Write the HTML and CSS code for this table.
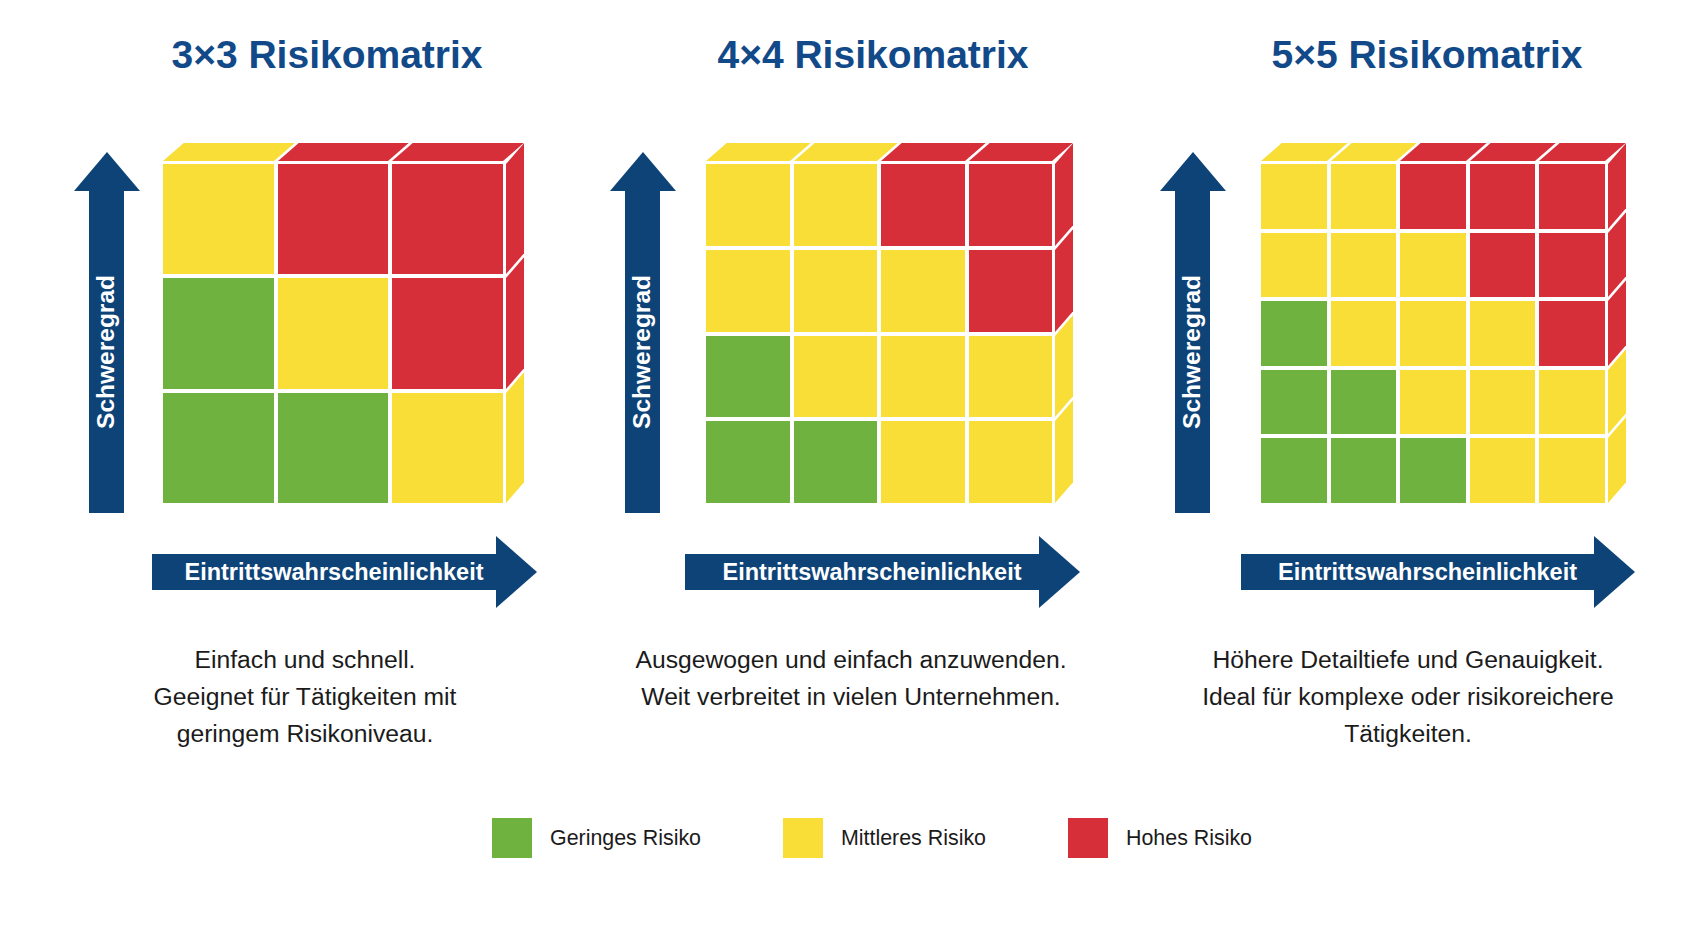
FILE: index.html
```html
<!DOCTYPE html>
<html lang="de">
<head>
<meta charset="utf-8">
<title>Risikomatrix Vergleich</title>
<link rel="stylesheet" href="styles.css">
</head>
<body>
<main class="page">
  <div class="columns">
    <section class="col col--a">
      <h2 class="title">3×3 Risikomatrix</h2>
      <div class="chart">
        <div class="v-arrow">
          <div class="v-head"></div>
          <div class="v-shaft"><span class="v-label">Schweregrad</span></div>
        </div>
        <div class="cube">
          <div class="face-top n3">
            <div class="y"></div><div class="r"></div><div class="r"></div>
          </div>
          <div class="face-front n3">
            <div class="y"></div><div class="r"></div><div class="r"></div>
            <div class="g"></div><div class="y"></div><div class="r"></div>
            <div class="g"></div><div class="g"></div><div class="y"></div>
          </div>
          <div class="face-side n3">
            <div class="r"></div><div class="r"></div><div class="y"></div>
          </div>
        </div>
      </div>
      <div class="h-arrow">
        <div class="h-body">Eintrittswahrscheinlichkeit</div>
        <div class="h-head"></div>
      </div>
      <p class="desc">Einfach und schnell.<br>Geeignet für Tätigkeiten mit<br>geringem Risikoniveau.</p>
    </section>

    <section class="col col--b">
      <h2 class="title">4×4 Risikomatrix</h2>
      <div class="chart">
        <div class="v-arrow">
          <div class="v-head"></div>
          <div class="v-shaft"><span class="v-label">Schweregrad</span></div>
        </div>
        <div class="cube">
          <div class="face-top n4">
            <div class="y"></div><div class="y"></div><div class="r"></div><div class="r"></div>
          </div>
          <div class="face-front n4">
            <div class="y"></div><div class="y"></div><div class="r"></div><div class="r"></div>
            <div class="y"></div><div class="y"></div><div class="y"></div><div class="r"></div>
            <div class="g"></div><div class="y"></div><div class="y"></div><div class="y"></div>
            <div class="g"></div><div class="g"></div><div class="y"></div><div class="y"></div>
          </div>
          <div class="face-side n4">
            <div class="r"></div><div class="r"></div><div class="y"></div><div class="y"></div>
          </div>
        </div>
      </div>
      <div class="h-arrow">
        <div class="h-body">Eintrittswahrscheinlichkeit</div>
        <div class="h-head"></div>
      </div>
      <p class="desc">Ausgewogen und einfach anzuwenden.<br>Weit verbreitet in vielen Unternehmen.</p>
    </section>

    <section class="col col--c">
      <h2 class="title">5×5 Risikomatrix</h2>
      <div class="chart">
        <div class="v-arrow">
          <div class="v-head"></div>
          <div class="v-shaft"><span class="v-label">Schweregrad</span></div>
        </div>
        <div class="cube">
          <div class="face-top n5">
            <div class="y"></div><div class="y"></div><div class="r"></div><div class="r"></div><div class="r"></div>
          </div>
          <div class="face-front n5">
            <div class="y"></div><div class="y"></div><div class="r"></div><div class="r"></div><div class="r"></div>
            <div class="y"></div><div class="y"></div><div class="y"></div><div class="r"></div><div class="r"></div>
            <div class="g"></div><div class="y"></div><div class="y"></div><div class="y"></div><div class="r"></div>
            <div class="g"></div><div class="g"></div><div class="y"></div><div class="y"></div><div class="y"></div>
            <div class="g"></div><div class="g"></div><div class="g"></div><div class="y"></div><div class="y"></div>
          </div>
          <div class="face-side n5">
            <div class="r"></div><div class="r"></div><div class="r"></div><div class="y"></div><div class="y"></div>
          </div>
        </div>
      </div>
      <div class="h-arrow">
        <div class="h-body">Eintrittswahrscheinlichkeit</div>
        <div class="h-head"></div>
      </div>
      <p class="desc">Höhere Detailtiefe und Genauigkeit.<br>Ideal für komplexe oder risikoreichere<br>Tätigkeiten.</p>
    </section>
  </div>

  <ul class="legend">
    <li class="legend-item"><span class="swatch g"></span>Geringes Risiko</li>
    <li class="legend-item"><span class="swatch y"></span>Mittleres Risiko</li>
    <li class="legend-item"><span class="swatch r"></span>Hohes Risiko</li>
  </ul>
</main>
</body>
</html>
```

FILE: styles.css
```css
* { box-sizing: border-box; }

html, body {
  margin: 0;
  padding: 0;
  background: #ffffff;
}

body {
  font-family: "Liberation Sans", Arial, Helvetica, sans-serif;
  color: #1b1b1b;
  width: 1701px;
  height: 925px;
  overflow: hidden;
}

.page {
  padding-top: 32px;
}

.columns {
  display: grid;
  grid-template-columns: 536px 550px 1fr;
  padding-left: 73px;
  align-items: start;
}

.col {
  --navy: #0e4378;
  display: flex;
  flex-direction: column;
  align-items: flex-start;
}

.col--a { --gap: 23px; --mw: 340px; --ha-off: -11px; --ha-w: 385px; --desc-shift: -3px; }
.col--b { --gap: 30px; --mw: 346px; --ha-off: -21px; --ha-w: 395px; --desc-shift: 0px; }
.col--c { --gap: 35px; --mw: 344px; --ha-off: -20px; --ha-w: 394px; --desc-shift: 2px; }

/* ---------- title ---------- */
.title {
  margin: 0 0 0 calc(61px + var(--gap));
  width: var(--mw);
  text-align: center;
  font-size: 39px;
  line-height: 46px;
  font-weight: 700;
  color: #124a89;
  white-space: nowrap;
}

/* ---------- chart row ---------- */
.chart {
  display: flex;
  align-items: flex-start;
  gap: var(--gap);
  margin-top: 65px;
}

.v-arrow {
  width: 67px;
  margin-top: 9px;
  display: flex;
  flex-direction: column;
  align-items: center;
}

.v-head {
  width: 0;
  height: 0;
  border-left: 33.5px solid transparent;
  border-right: 33.5px solid transparent;
  border-bottom: 39px solid var(--navy);
}

.v-shaft {
  width: 35px;
  height: 322px;
  background: var(--navy);
  display: flex;
  align-items: center;
  justify-content: center;
}

.v-label {
  writing-mode: vertical-rl;
  transform: rotate(180deg);
  color: #ffffff;
  font-weight: 700;
  font-size: 24.5px;
  line-height: 1;
  white-space: nowrap;
}

/* ---------- 3D matrix ---------- */
.cube {
  position: relative;
  padding: 21px 22px 0 0;
}

.face-front {
  width: var(--mw);
  height: 339px;
  display: grid;
  gap: 4px;
  background: #ffffff;
}

.face-top {
  position: absolute;
  left: 0;
  top: 0;
  width: var(--mw);
  height: 18px;
  display: grid;
  grid-template-rows: 1fr;
  gap: 4px;
  transform-origin: 0 100%;
  transform: skewX(-49deg);
}

.face-side {
  position: absolute;
  left: calc(var(--mw) + 3px);
  top: 21px;
  width: 18px;
  height: 339px;
  display: grid;
  grid-template-columns: 1fr;
  gap: 4px;
  transform-origin: 0 0;
  transform: skewY(-49deg);
}

.face-front.n3 { grid-template-columns: repeat(3, 1fr); grid-template-rows: repeat(3, 1fr); }
.face-front.n4 { grid-template-columns: repeat(4, 1fr); grid-template-rows: repeat(4, 1fr); }
.face-front.n5 { grid-template-columns: repeat(5, 1fr); grid-template-rows: repeat(5, 1fr); }
.face-top.n3 { grid-template-columns: repeat(3, 1fr); }
.face-top.n4 { grid-template-columns: repeat(4, 1fr); }
.face-top.n5 { grid-template-columns: repeat(5, 1fr); }
.face-side.n3 { grid-template-rows: repeat(3, 1fr); }
.face-side.n4 { grid-template-rows: repeat(4, 1fr); }
.face-side.n5 { grid-template-rows: repeat(5, 1fr); }

.g { background: #6fb23f; }
.y { background: #f8de37; }
.r { background: #d72f3a; }

/* ---------- horizontal arrow ---------- */
.h-arrow {
  display: flex;
  align-items: center;
  height: 73px;
  width: var(--ha-w);
  margin-top: 22px;
  margin-left: calc(67px + var(--gap) + var(--ha-off));
}

.h-body {
  flex: 1;
  height: 36px;
  background: var(--navy);
  color: #ffffff;
  font-weight: 700;
  font-size: 23.5px;
  line-height: 36px;
  text-align: center;
  padding-left: 20px;
  white-space: nowrap;
}

.h-head {
  width: 0;
  height: 0;
  border-top: 36.5px solid transparent;
  border-bottom: 36.5px solid transparent;
  border-left: 41px solid var(--navy);
}

/* ---------- description ---------- */
.desc {
  margin: 33px 0 0 calc(67px + var(--gap) - 105px + var(--desc-shift));
  width: 500px;
  text-align: center;
  font-size: 24.7px;
  line-height: 37px;
  color: #1b1b1b;
  white-space: nowrap;
}

/* ---------- legend ---------- */
.legend {
  list-style: none;
  margin: 66px 0 0 492px;
  padding: 0;
  display: flex;
  align-items: center;
  gap: 82px;
}

.legend-item {
  display: flex;
  align-items: center;
  gap: 18px;
  font-size: 21.4px;
  line-height: 40px;
  color: #1b1b1b;
  white-space: nowrap;
}

.swatch {
  display: block;
  width: 40px;
  height: 40px;
}
```
